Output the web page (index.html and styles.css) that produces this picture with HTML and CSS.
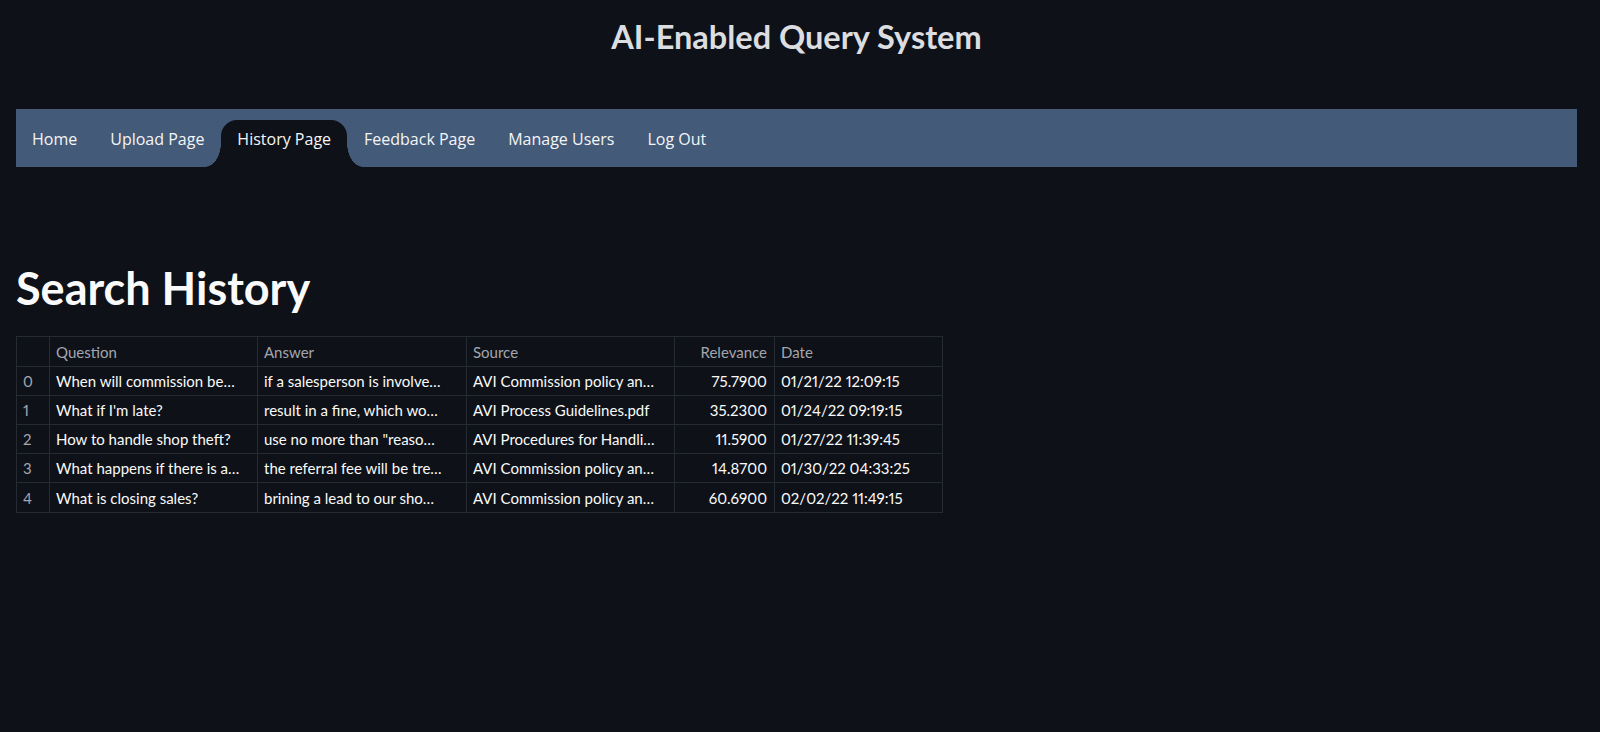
FILE: index.html
```html
<!DOCTYPE html>
<html lang="en">
<head>
<meta charset="utf-8">
<title>AI-Enabled Query System</title>
<link rel="stylesheet" href="styles.css">
</head>
<body>
<div class="app">
  <header class="app-header">
    <div class="app-title">AI-Enabled Query System</div>
  </header>
  <nav class="menu">
    <a class="menu-item">Home</a>
    <a class="menu-item">Upload Page</a>
    <a class="menu-item active">History Page</a>
    <a class="menu-item">Feedback Page</a>
    <a class="menu-item">Manage Users</a>
    <a class="menu-item">Log Out</a>
  </nav>
  <main class="content">
    <h1 class="page-title">Search History</h1>
    <div class="grid">
      <div class="cell head idx"></div>
      <div class="cell head">Question</div>
      <div class="cell head">Answer</div>
      <div class="cell head">Source</div>
      <div class="cell head num">Relevance</div>
      <div class="cell head">Date</div>

      <div class="cell idx">0</div>
      <div class="cell">When will commission be…</div>
      <div class="cell">if a salesperson is involve…</div>
      <div class="cell">AVI Commission policy an…</div>
      <div class="cell num">75.7900</div>
      <div class="cell">01/21/22 12:09:15</div>

      <div class="cell idx">1</div>
      <div class="cell">What if I'm late?</div>
      <div class="cell">result in a fine, which wo…</div>
      <div class="cell">AVI Process Guidelines.pdf</div>
      <div class="cell num">35.2300</div>
      <div class="cell">01/24/22 09:19:15</div>

      <div class="cell idx">2</div>
      <div class="cell">How to handle shop theft?</div>
      <div class="cell">use no more than "reaso…</div>
      <div class="cell">AVI Procedures for Handli…</div>
      <div class="cell num">11.5900</div>
      <div class="cell">01/27/22 11:39:45</div>

      <div class="cell idx">3</div>
      <div class="cell">What happens if there is a…</div>
      <div class="cell">the referral fee will be tre…</div>
      <div class="cell">AVI Commission policy an…</div>
      <div class="cell num">14.8700</div>
      <div class="cell">01/30/22 04:33:25</div>

      <div class="cell idx">4</div>
      <div class="cell">What is closing sales?</div>
      <div class="cell">brining a lead to our sho…</div>
      <div class="cell">AVI Commission policy an…</div>
      <div class="cell num">60.6900</div>
      <div class="cell">02/02/22 11:49:15</div>
    </div>
  </main>
</div>
</body>
</html>
```
FILE: styles.css
```css
html, body {
  margin: 0;
  padding: 0;
  background: #0e1117;
}
body {
  height: 732px;
  overflow: hidden;
  font-family: "Lato", "Liberation Sans", sans-serif;
  color: #fafafa;
}
.app {
  padding: 0 23px 0 16px;
}
.app-header {
  padding-top: 17px;
  display: flex;
  justify-content: center;
}
.app-title {
  font-size: 32.5px;
  line-height: 1.2;
  font-weight: 700;
  color: #dcdde0;
}
.menu {
  margin-top: 53px;
  height: 58px;
  box-sizing: border-box;
  padding-top: 11px;
  background: #435a78;
  display: flex;
  align-items: stretch;
  gap: 1px;
}
.menu-item {
  position: relative;
  display: flex;
  align-items: center;
  padding: 0 16px 9px;
  font-family: "Open Sans", "Noto Sans", sans-serif;
  font-size: 16px;
  color: #f4f5f7;
  white-space: nowrap;
}
.menu-item.active {
  background: #0e1117;
  border-radius: 16px 16px 0 0;
}
.menu-item.active::before,
.menu-item.active::after {
  content: "";
  position: absolute;
  bottom: 0;
  width: 16px;
  height: 24px;
}
.menu-item.active::before {
  left: -16px;
  background: radial-gradient(ellipse 16px 24px at 0 0, #435a78 98%, #0e1117 100%);
}
.menu-item.active::after {
  right: -16px;
  background: radial-gradient(ellipse 16px 24px at 100% 0, #435a78 98%, #0e1117 100%);
}
.content {
  padding-top: 94px;
}
.page-title {
  margin: 0;
  font-size: 45px;
  line-height: 1.2;
  font-weight: 700;
  color: #fafafa;
}
.grid {
  margin-top: 21px;
  display: grid;
  grid-template-columns: 33px 208px 209px 208px 100px 168px;
  grid-template-rows: 30px 29px 29px 29px 29px 30px;
  width: max-content;
  border-top: 1px solid #262a33;
  border-left: 1px solid #262a33;
}
.cell {
  box-sizing: border-box;
  border-right: 1px solid #262a33;
  border-bottom: 1px solid #262a33;
  padding: 0 7px 0 6px;
  display: flex;
  align-items: center;
  font-size: 15px;
  font-variant-numeric: proportional-nums;
  color: #fafafa;
  white-space: nowrap;
  overflow: hidden;
}
.cell.head {
  color: #a3a6af;
}
.cell.idx {
  color: #a3a6af;
}
.cell.num {
  justify-content: flex-end;
}
```
